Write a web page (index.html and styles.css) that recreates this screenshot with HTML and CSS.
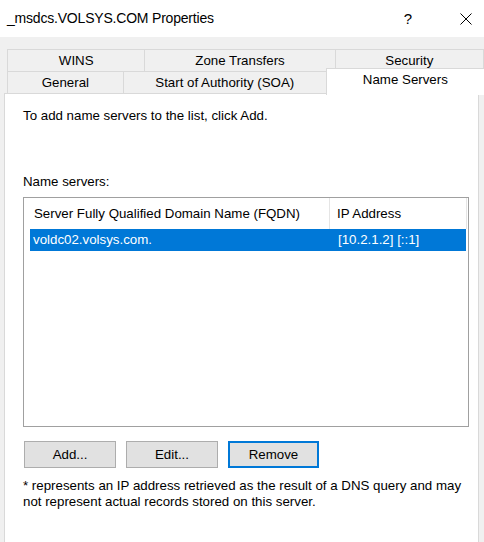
FILE: index.html
```html
<!DOCTYPE html>
<html>
<head>
<meta charset="utf-8">
<link rel="stylesheet" href="styles.css">
</head>
<body>
<div class="titlebar">
  <span class="title">_msdcs.VOLSYS.COM Properties</span>
  <span class="help">?</span>
  <svg class="close" viewBox="0 0 12 12" width="12" height="12"><path d="M0.5 0.5 L11.5 11.5 M11.5 0.5 L0.5 11.5" stroke="#000" stroke-width="1" fill="none"/></svg>
</div>
<div class="tabstrip">
  <div class="tabrow">
    <div class="tab t-wins">WINS</div>
    <div class="tab t-zone">Zone Transfers</div>
    <div class="tab t-sec">Security</div>
  </div>
  <div class="tabrow">
    <div class="tab t-gen">General</div>
    <div class="tab t-soa">Start of Authority (SOA)</div>
    <div class="tab t-sel">Name Servers</div>
  </div>
</div>
<div class="panel">
  <p class="intro">To add name servers to the list, click Add.</p>
  <p class="label">Name servers:</p>
  <div class="listbox">
    <div class="lv-head">
      <div class="h1">Server Fully Qualified Domain Name (FQDN)</div>
      <div class="h2">IP Address</div>
    </div>
    <div class="lv-row">
      <div class="c1">voldc02.volsys.com.</div>
      <div class="c2">[10.2.1.2] [::1]</div>
    </div>
  </div>
  <div class="buttons">
    <button class="btn">Add...</button>
    <button class="btn">Edit...</button>
    <button class="btn default">Remove</button>
  </div>
  <p class="note">* represents an IP address retrieved as the result of a DNS query and may<br>not represent actual records stored on this server.</p>
</div>
</body>
</html>
```
FILE: styles.css
```css
* { box-sizing: border-box; margin: 0; padding: 0; }
html, body { width: 484px; height: 542px; overflow: hidden; }
body {
  background: #f0f0f0;
  font-family: "Liberation Sans", Arial, sans-serif;
  font-size: 13.3px;
  color: #000;
}
.titlebar {
  height: 37px;
  background: #fff;
  display: flex;
  align-items: center;
  padding-right: 12px;
}
.title {
  flex: 1;
  padding-left: 7px;
  font-size: 14px;
  letter-spacing: -0.2px;
  line-height: 37px;
}
.help {
  width: 14px;
  text-align: center;
  font-size: 15px;
  margin-right: 45px;
  line-height: 37px;
}
.close { display: block; width: 12px; height: 12px; }

.tabstrip { margin: 12px 0 0 7px; }
.tabrow { display: flex; height: 22px; }
.tab {
  height: 22px;
  border-top: 1px solid #d9d9d9;
  border-left: 1px solid #d9d9d9;
  display: flex;
  align-items: center;
  justify-content: center;
  line-height: 16px;
  white-space: nowrap;
}
.t-wins { width: 138px; }
.t-zone { width: 191px; }
.t-sec { width: 150px; border-right: 1px solid #d9d9d9; }
.t-gen { width: 117px; }
.t-soa { width: 205px; }
.t-sel {
  width: 160px;
  height: 27px;
  margin-top: -3px;
  margin-bottom: -2px;
  background: #fff;
  align-items: flex-start;
  padding-top: 3px;
  position: relative;
  z-index: 1;
}

.panel {
  margin-left: 4px;
  width: 475px;
  height: 460px;
  background: #fff;
  border: 1px solid #d9d9d9;
  padding: 14px 0 0 18px;
  line-height: 16px;
}
.label { margin-top: 50px; }
.listbox {
  margin-top: 7px;
  width: 446px;
  height: 230px;
  border: 1px solid #a0a0a0;
}
.lv-head { display: flex; height: 31px; }
.h1 {
  width: 306px;
  padding: 8px 0 0 10px;
  border-right: 1px solid #e5e5e5;
}
.h2 {
  width: 137px;
  padding: 8px 0 0 7px;
  border-right: 1px solid #e5e5e5;
}
.lv-row {
  margin-left: 6px;
  width: 436px;
  height: 22px;
  background: #0078d7;
  color: #fff;
  display: flex;
  align-items: center;
}
.c1 { width: 299px; padding-left: 3px; }
.c2 { padding-left: 9px; }

.buttons {
  display: flex;
  gap: 10px;
  margin: 14px 0 0 1px;
}
.btn {
  width: 92px;
  height: 27px;
  background: #e1e1e1;
  border: 1px solid #adadad;
  font: inherit;
  color: #000;
}
.btn.default { width: 91px; border: 2px solid #0078d7; }
.note { margin-top: 10px; }
```
